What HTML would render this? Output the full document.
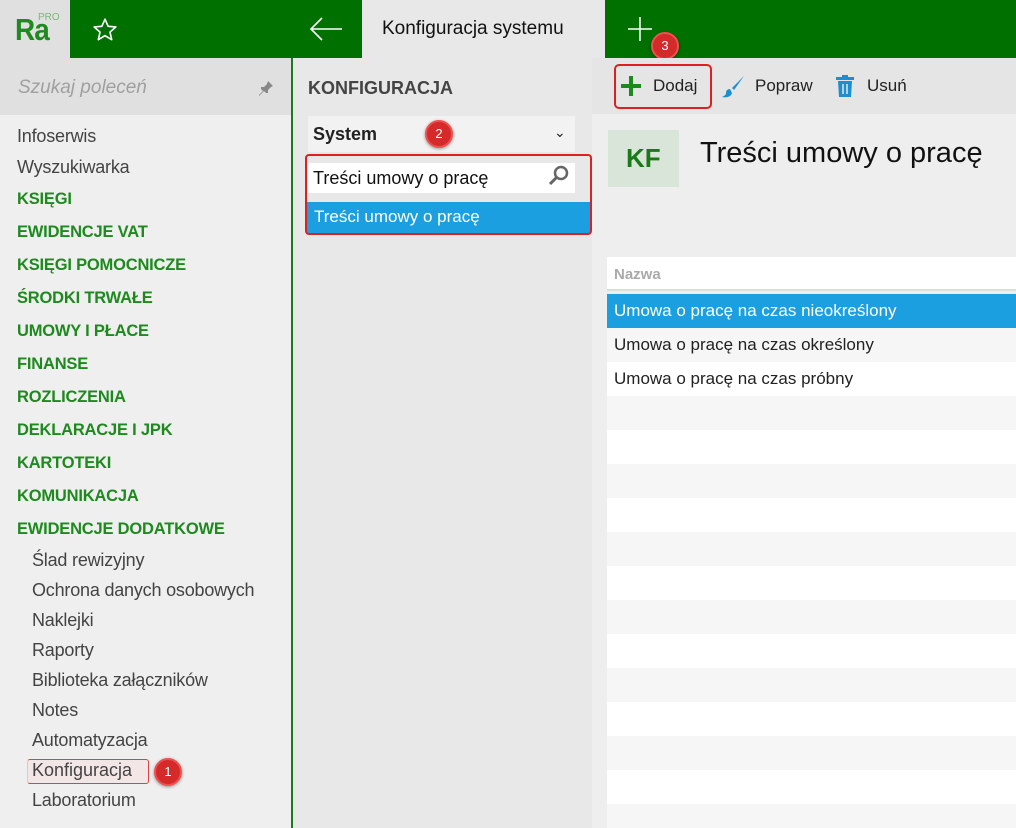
<!DOCTYPE html>
<html style="overflow:hidden;width:1016px;height:828px"><head><meta charset="utf-8"><style>
*{margin:0;padding:0;box-sizing:border-box}
body{width:1016px;height:828px;overflow:hidden;position:relative;font-family:"Liberation Sans",sans-serif;background:#efefef;color:#333}
.a{position:absolute}
.g{background:#007000}
.side div{position:absolute;left:17px;font-size:18px;color:#444;white-space:nowrap;letter-spacing:-0.2px}
.side .h{color:#1e8a1e;font-weight:bold;font-size:16.5px}
.side .s{left:32px}
.badge{position:absolute;width:28px;height:28px;border-radius:50%;background:#d42a2a;border:2px solid #f05050;color:#fff;font-size:13px;text-align:center;line-height:24px;box-shadow:0 1px 3px rgba(0,0,0,.4)}
.row{position:absolute;left:607px;width:409px;height:34px;font-size:17px;line-height:34px;padding-left:7px;color:#222}
</style></head><body>
<div class="a" style="left:0;top:0;width:70px;height:58px;background:#e0e0e0"></div>
<div class="a" style="left:15px;top:12px;font-size:31px;color:#1f8a1f;letter-spacing:-1px;font-weight:bold;transform:scaleX(0.9);transform-origin:left">Ra</div>
<div class="a" style="left:38px;top:12px;font-size:10px;color:#7ab87a">PRO</div>
<div class="a g" style="left:70px;top:0;width:292px;height:58px"></div>
<svg class="a" style="left:92px;top:17px" width="26" height="26" viewBox="0 0 24 24"><path d="M12 2l2.9 6.6 7.1.6-5.4 4.7 1.6 7-6.2-3.7-6.2 3.7 1.6-7L2 9.2l7.1-.6z" fill="none" stroke="#fff" stroke-width="1.5" stroke-linejoin="round"/></svg>
<svg class="a" style="left:308px;top:16px" width="36" height="26" viewBox="0 0 36 26"><path d="M34 13H3M14 2L3 13l11 11" fill="none" stroke="#fff" stroke-width="1.6"/></svg>
<div class="a" style="left:362px;top:0;width:243px;height:58px;background:#e8e8e8"></div>
<div class="a" style="left:382px;top:18px;font-size:19px;color:#111">Konfiguracja systemu</div>
<div class="a g" style="left:605px;top:0;width:411px;height:58px"></div>
<svg class="a" style="left:628px;top:17px" width="24" height="24"><path d="M12 0v24M0 12h24" stroke="#fff" stroke-width="1.5"/></svg>
<div class="badge" style="left:651px;top:32px">3</div>
<div class="a" style="left:0;top:58px;width:291px;height:57px;background:#e0e0e0"></div>
<div class="a" style="left:18px;top:77px;font-size:19px;font-style:italic;color:#a0a0a0">Szukaj poleceń</div>
<svg class="a" style="left:258px;top:80px" width="16" height="16" viewBox="0 0 16 16"><path d="M10 1l5 5-2 1-3 3 0 3-2 0-2-2-5 5 0-1 4-4-2-2 0-2 3 0 3-3z" fill="#888"/></svg>
<div class="a" style="left:291px;top:58px;width:2px;height:770px;background:#1f7a1f"></div>
<div class="side">
<div style="top:126px">Infoserwis</div>
<div style="top:157px">Wyszukiwarka</div>
<div class="h" style="top:190px">KSIĘGI</div>
<div class="h" style="top:223px">EWIDENCJE VAT</div>
<div class="h" style="top:256px">KSIĘGI POMOCNICZE</div>
<div class="h" style="top:289px">ŚRODKI TRWAŁE</div>
<div class="h" style="top:322px">UMOWY I PŁACE</div>
<div class="h" style="top:355px">FINANSE</div>
<div class="h" style="top:388px">ROZLICZENIA</div>
<div class="h" style="top:421px">DEKLARACJE I JPK</div>
<div class="h" style="top:454px">KARTOTEKI</div>
<div class="h" style="top:487px">KOMUNIKACJA</div>
<div class="h" style="top:520px">EWIDENCJE DODATKOWE</div>
<div class="s" style="top:550px">Ślad rewizyjny</div>
<div class="s" style="top:580px">Ochrona danych osobowych</div>
<div class="s" style="top:610px">Naklejki</div>
<div class="s" style="top:640px">Raporty</div>
<div class="s" style="top:670px">Biblioteka załączników</div>
<div class="s" style="top:700px">Notes</div>
<div class="s" style="top:730px">Automatyzacja</div>
<div class="s" style="top:790px">Laboratorium</div>
</div>
<div class="a" style="left:27px;top:759px;width:122px;height:25px;border:1.5px solid #e04040;border-left-color:#f5c0c0;border-radius:3px;background:#f3e6e6"></div>
<div class="a" style="left:32px;top:760px;font-size:18px;color:#444">Konfiguracja</div>
<div class="badge" style="left:154px;top:758px">1</div>
<div class="a" style="left:293px;top:58px;width:299px;height:770px;background:#e8e8e8"></div>
<div class="a" style="left:308px;top:78px;font-size:18px;font-weight:bold;color:#444">KONFIGURACJA</div>
<div class="a" style="left:308px;top:116px;width:267px;height:36px;background:#f2f2f2"></div>
<div class="a" style="left:313px;top:124px;font-size:18px;font-weight:bold;color:#222">System</div>
<div class="a" style="left:554px;top:124px;font-size:14px;color:#222">⌄</div>
<div class="badge" style="left:425px;top:120px">2</div>
<div class="a" style="left:308px;top:163px;width:267px;height:30px;background:#fff"></div>
<div class="a" style="left:313px;top:168px;font-size:18px;color:#111">Treści umowy o pracę</div>
<svg class="a" style="left:548px;top:165px" width="22" height="22" viewBox="0 0 22 22"><circle cx="13" cy="8" r="6" fill="none" stroke="#666" stroke-width="2.5"/><path d="M9 12L2 19" stroke="#666" stroke-width="3"/></svg>
<div class="a" style="left:307px;top:202px;width:284px;height:31px;background:#1b9fe0"></div>
<div class="a" style="left:314px;top:207px;font-size:17px;color:#fff">Treści umowy o pracę</div>
<div class="a" style="left:305px;top:154px;width:287px;height:81px;border:2px solid #e02020;border-radius:4px"></div>
<div class="a" style="left:592px;top:58px;width:424px;height:770px;background:#eeeeee"></div>
<div class="a" style="left:592px;top:58px;width:424px;height:56px;background:#e5e5e5"></div>
<div class="a" style="left:614px;top:64px;width:98px;height:45px;border:2px solid #e02020;border-radius:5px"></div>
<svg class="a" style="left:621px;top:76px" width="20" height="20"><path d="M10 0v20M0 10h20" stroke="#1a8a1a" stroke-width="4"/></svg>
<div class="a" style="left:653px;top:76px;font-size:17px;color:#222">Dodaj</div>
<svg class="a" style="left:721px;top:75px" width="24" height="24" viewBox="0 0 24 24"><path d="M23 1L11 13l2 2L23 1z" fill="#1b8fd0"/><path d="M9 14c-3 0-4 2-4 4s-2 3-4 4c4 1 9 0 10-4z" fill="#1b8fd0"/></svg>
<div class="a" style="left:755px;top:76px;font-size:17px;color:#222">Popraw</div>
<svg class="a" style="left:836px;top:75px" width="18" height="22" viewBox="0 0 18 22"><rect x="0" y="2" width="18" height="3" fill="#1b8fd0"/><rect x="6" y="0" width="6" height="3" fill="#1b8fd0"/><path d="M2 6h14l-1 16H3z" fill="#1b8fd0"/><path d="M7 9v10M11 9v10" stroke="#e5e5e5" stroke-width="1.5"/></svg>
<div class="a" style="left:867px;top:76px;font-size:17px;color:#222">Usuń</div>
<div class="a" style="left:608px;top:130px;width:71px;height:57px;background:#d8e5d8"></div>
<div class="a" style="left:626px;top:143px;font-size:26px;color:#1a7a1a;font-weight:bold">KF</div>
<div class="a" style="left:700px;top:137px;font-size:29px;color:#111">Treści umowy o pracę</div>
<div class="a" style="left:607px;top:257px;width:409px;height:34px;background:#fff;border-bottom:2px solid #ddd"></div>
<div class="a" style="left:614px;top:266px;font-size:15px;font-weight:bold;color:#aaa">Nazwa</div>
<div class="row" style="top:294px;background:#1b9fe0;color:#fff">Umowa o pracę na czas nieokreślony</div>
<div class="row" style="top:328px;background:#f6f6f6">Umowa o pracę na czas określony</div>
<div class="row" style="top:362px;background:#fff">Umowa o pracę na czas próbny</div>
<div class="row" style="top:396px;background:#f6f6f6"></div>
<div class="row" style="top:430px;background:#fff"></div>
<div class="row" style="top:464px;background:#f6f6f6"></div>
<div class="row" style="top:498px;background:#fff"></div>
<div class="row" style="top:532px;background:#f6f6f6"></div>
<div class="row" style="top:566px;background:#fff"></div>
<div class="row" style="top:600px;background:#f6f6f6"></div>
<div class="row" style="top:634px;background:#fff"></div>
<div class="row" style="top:668px;background:#f6f6f6"></div>
<div class="row" style="top:702px;background:#fff"></div>
<div class="row" style="top:736px;background:#f6f6f6"></div>
<div class="row" style="top:770px;background:#fff"></div>
<div class="row" style="top:804px;height:24px;background:#f6f6f6"></div>
</body></html>
